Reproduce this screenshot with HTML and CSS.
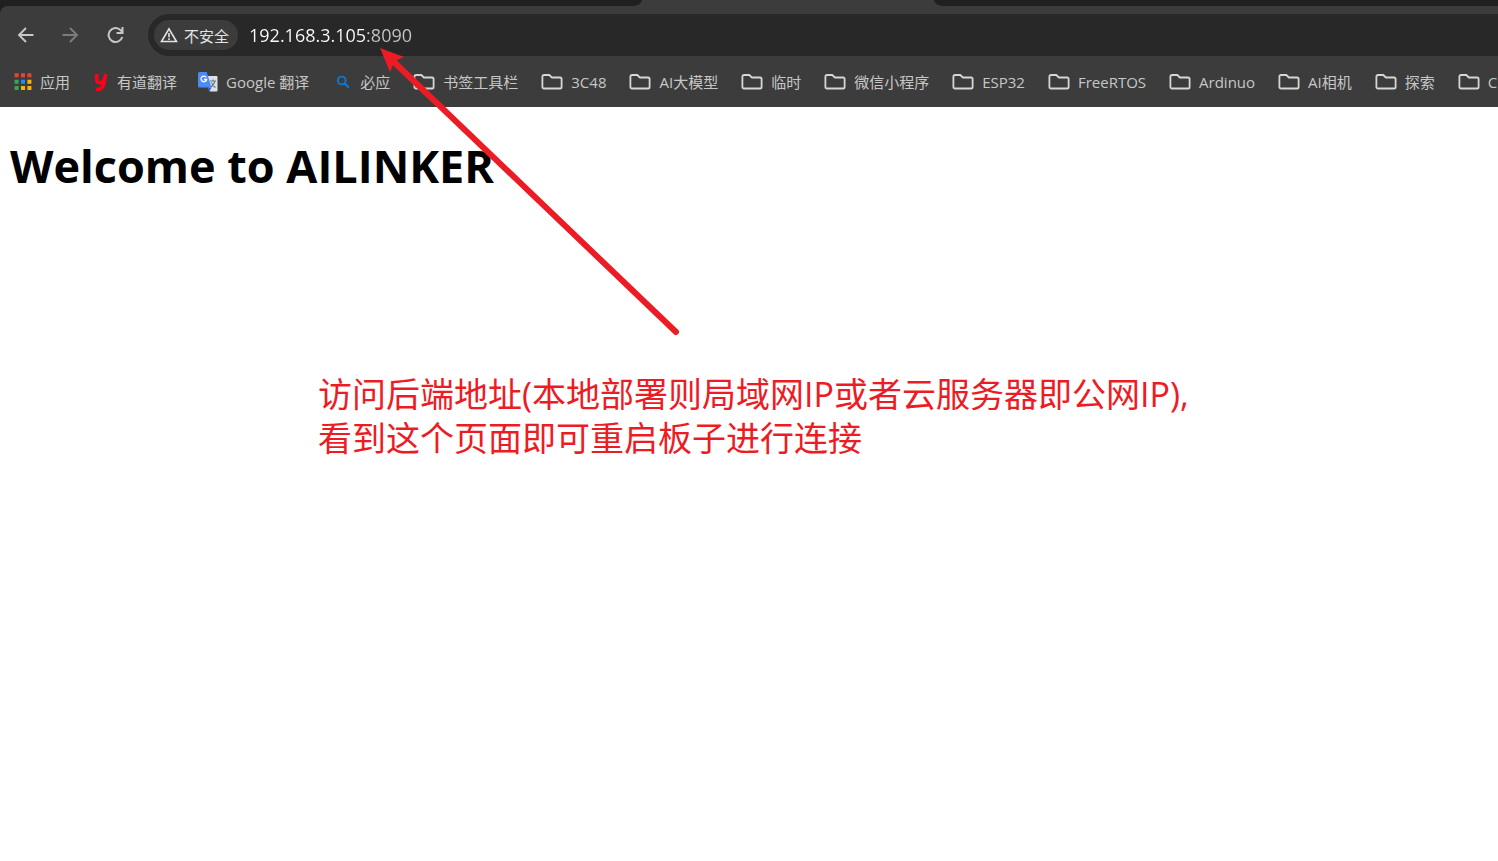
FILE: index.html
```html
<!DOCTYPE html>
<html lang="zh-CN">
<head>
<meta charset="utf-8">
<title>AILINKER</title>
<link rel="stylesheet" href="styles.css">
</head>
<body>
<svg class="symbols" aria-hidden="true">
  <symbol id="folder" viewBox="0 0 22 18"><path d="M3 2h5.3l2.6 2.5H19a1.6 1.6 0 0 1 1.6 1.6v7.8a1.6 1.6 0 0 1-1.6 1.6H3a1.6 1.6 0 0 1-1.6-1.6V3.6A1.6 1.6 0 0 1 3 2z" fill="none" stroke="currentColor" stroke-width="1.8"/></symbol>
</svg>
<header class="browser">
  <div class="tabs"><div class="tabs-before"></div><div class="tab-active"></div><div class="tabs-after"></div></div>
  <div class="chrome">
    <div class="toolbar">
      <button class="nav" aria-label="后退"><svg width="18" height="18" viewBox="0 0 18 18"><path d="M16.5 9H2M9 2L2 9l7 7" fill="none" stroke="currentColor" stroke-width="1.9"/></svg></button>
      <button class="nav" aria-label="前进" disabled><svg width="18" height="18" viewBox="0 0 18 18"><path d="M.5 9H15M8 2l7 7-7 7" fill="none" stroke="currentColor" stroke-width="1.9"/></svg></button>
      <button class="nav" aria-label="刷新"><svg width="18" height="18" viewBox="0 0 18 18"><path d="M15.3 11A7 7 0 1 1 13.7 4.2L15.5 6.2" fill="none" stroke="currentColor" stroke-width="2"/><path d="M16.5 1v7h-7V6h5V1z" fill="currentColor"/></svg></button>
      <div class="omnibox">
        <button class="security"><svg width="18" height="16" viewBox="0 0 18 16"><path d="M9 1.8L16.5 14.5h-15z" fill="none" stroke="currentColor" stroke-width="1.6"/><path d="M9 6v4.2M9 11.3v1.7" stroke="currentColor" stroke-width="1.6"/></svg>不安全</button>
        <input class="address" type="text" aria-label="地址" value="192.168.3.105:8090" spellcheck="false">
      </div>
    </div>
    <nav class="bookmarks">
      <a href="#"><svg width="18" height="18" viewBox="0 0 18 18"><path d="M.6.3h4v4h-4zM7 .3h4v4H7zM13.4.3h4v4h-4z" fill="#ea4335"/><path d="M.6 6.7h4v4h-4zM.6 13.1h4v4h-4z" fill="#34a853"/><path d="M7 6.7h4v4H7z" fill="#1a8cff"/><path d="M13.4 6.7h4v4h-4zM7 13.1h4v4H7zM13.4 13.1h4v4h-4z" fill="#fbb400"/></svg>应用</a>
      <a href="#"><svg width="16" height="20" viewBox="0 0 16 20"><path d="M4 2.2L3.6 7.2Q3.4 11 6.9 10.8Q10.2 10.5 11.6 7L12.8 2.2M11.6 7Q10.8 14 8.4 16.1Q6.3 18.1 3 17" fill="none" stroke="#ff0018" stroke-width="3.6"/></svg>有道翻译</a>
      <a href="#" class="translate"><svg width="20" height="20" viewBox="0 0 20 20"><path d="M8 4h10.5q1 0 1 1v13.5q0 1-1 1h-7z" fill="#dde1e5"/><path d="M1.5 0h7.2l4.8 15.5H1.5Q0 15.5 0 14V1.5Q0 0 1.5 0z" fill="#4c8bf5"/><path d="M9 15.5h4.5l-2 4z" fill="#2864cf"/><path d="M8.2 5.4A2.8 2.8 0 1 0 8.6 7.5H6" fill="none" stroke="#fff" stroke-width="1.3"/><path d="M12 9h6M15 7.5V9M17 9q-1 4-4 6M13.5 10.5q1 3 4 5" fill="none" stroke="#64788a" stroke-width="1.1"/></svg>Google 翻译</a>
      <a href="#" class="search"><svg width="16" height="14" viewBox="0 0 16 14"><circle cx="5.7" cy="5.5" r="3.9" fill="none" stroke="#0f78d4" stroke-width="1.8"/><path d="M8.5 8.3l4.3 4.3" stroke="#0f78d4" stroke-width="2"/></svg>必应</a>
      <a href="#"><svg class="folder"><use href="#folder"/></svg>书签工具栏</a>
      <a href="#"><svg class="folder"><use href="#folder"/></svg>3C48</a>
      <a href="#"><svg class="folder"><use href="#folder"/></svg>AI大模型</a>
      <a href="#"><svg class="folder"><use href="#folder"/></svg>临时</a>
      <a href="#"><svg class="folder"><use href="#folder"/></svg>微信小程序</a>
      <a href="#"><svg class="folder"><use href="#folder"/></svg>ESP32</a>
      <a href="#"><svg class="folder"><use href="#folder"/></svg>FreeRTOS</a>
      <a href="#"><svg class="folder"><use href="#folder"/></svg>Ardinuo</a>
      <a href="#"><svg class="folder"><use href="#folder"/></svg>AI相机</a>
      <a href="#"><svg class="folder"><use href="#folder"/></svg>探索</a>
      <a href="#"><svg class="folder"><use href="#folder"/></svg>C</a>
    </nav>
  </div>
</header>
<main>
  <h1>Welcome to AILINKER</h1>
</main>
<svg class="arrow" width="300" height="288" viewBox="0 0 300 288" aria-hidden="true"><path d="M15 15L296 284" stroke="#ed1c24" stroke-width="6" stroke-linecap="round"/><path d="M0 0l24 9-9 4-2 4-3 7z" fill="#ed1c24"/></svg>
<p class="note">访问后端地址(本地部署则局域网IP或者云服务器即公网IP),<br>看到这个页面即可重启板子进行连接</p>
</body>
</html>
```
FILE: styles.css
```css
* { box-sizing: border-box; }
body {
  margin: 0;
  min-height: 100vh;
  background: #fff;
  color: #000;
  font-family: "Open Sans", "Noto Sans CJK SC", sans-serif;
  position: relative;
}
.symbols { display: none; }
.browser { background: #1f2121; color: #c7c7c7; }
.tabs { display: flex; height: 6px; background: #3c3c3c; }
.tabs-before { flex: 642; background: #1f2121; border-bottom-right-radius: 12px 8px; }
.tab-active { flex: 292; }
.tabs-after { flex: 564; background: #1f2121; border-bottom-left-radius: 12px 8px; }
.chrome { background: #3c3c3c; border-top-left-radius: 8px; padding-top: 8px; }
.toolbar { display: flex; align-items: center; padding-left: 8px; }
button { border: 0; background: none; padding: 0; font: inherit; color: inherit; }
.nav { display: flex; justify-content: center; width: 36px; margin-right: 9px; }
.nav:disabled { color: #7c7c7c; }
.omnibox {
  flex: 1;
  display: flex;
  align-items: center;
  height: 42px;
  margin-left: 5px;
  padding-left: 6px;
  gap: 11px;
  background: #282828;
  border-radius: 21px 0 0 21px;
}
.security {
  display: flex;
  align-items: center;
  gap: 6px;
  height: 30px;
  padding: 0 9px 0 6px;
  border-radius: 15px;
  background: #3c3c3c;
  color: #e3e3e3;
  font-size: 15px;
}
.address {
  flex: 1;
  min-width: 0;
  border: 0;
  padding: 0;
  outline: 0;
  font: 18px/24px "Open Sans", sans-serif;
  color: transparent;
  background: linear-gradient(90deg, #fff 117px, #c7c7c7 117px);
  -webkit-background-clip: text;
  background-clip: text;
}
.bookmarks {
  display: flex;
  align-items: center;
  gap: 23px;
  height: 51px;
  padding-left: 14px;
  overflow: hidden;
  font-size: 15px;
  line-height: 22px;
}
.bookmarks a {
  flex: none;
  display: flex;
  align-items: center;
  gap: 8px;
  color: inherit;
  text-decoration: none;
  white-space: nowrap;
}
.bookmarks .translate { margin-left: -2px; }
.bookmarks .search { margin-left: 4px; }
.folder { width: 22px; height: 18px; color: #d6d6d6; }
h1 { margin: 26px 10px; font-size: 45px; line-height: 66px; font-weight: 700; }
.arrow { position: absolute; left: 380px; top: 48px; }
.note {
  position: absolute;
  left: 318px;
  top: 372px;
  margin: 0;
  color: #ed1c24;
  font-size: 34px;
  line-height: 44px;
  white-space: nowrap;
}
```
